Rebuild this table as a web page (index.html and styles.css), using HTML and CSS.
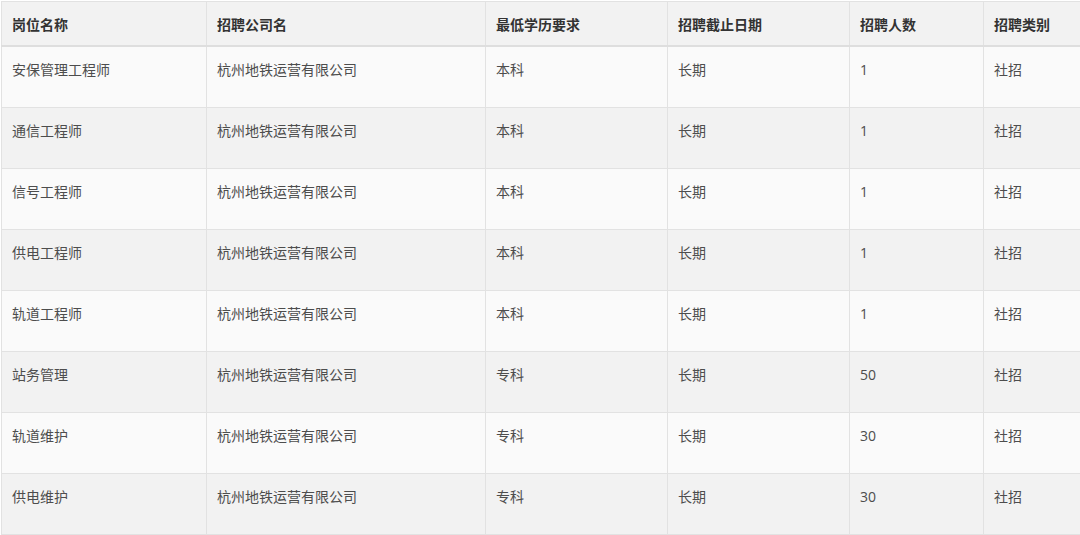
FILE: index.html
```html
<!DOCTYPE html>
<html lang="zh-CN">
<head>
<meta charset="utf-8">
<title>招聘信息</title>
<link rel="stylesheet" href="styles.css">
</head>
<body>
<div class="wrap">
<table class="jobs">
  <colgroup>
    <col class="c1"><col class="c2"><col class="c3"><col class="c4"><col class="c5"><col class="c6">
  </colgroup>
  <thead>
    <tr><th>岗位名称</th><th>招聘公司名</th><th>最低学历要求</th><th>招聘截止日期</th><th>招聘人数</th><th>招聘类别</th></tr>
  </thead>
  <tbody>
    <tr><td>安保管理工程师</td><td>杭州地铁运营有限公司</td><td>本科</td><td>长期</td><td>1</td><td>社招</td></tr>
    <tr><td>通信工程师</td><td>杭州地铁运营有限公司</td><td>本科</td><td>长期</td><td>1</td><td>社招</td></tr>
    <tr><td>信号工程师</td><td>杭州地铁运营有限公司</td><td>本科</td><td>长期</td><td>1</td><td>社招</td></tr>
    <tr><td>供电工程师</td><td>杭州地铁运营有限公司</td><td>本科</td><td>长期</td><td>1</td><td>社招</td></tr>
    <tr><td>轨道工程师</td><td>杭州地铁运营有限公司</td><td>本科</td><td>长期</td><td>1</td><td>社招</td></tr>
    <tr><td>站务管理</td><td>杭州地铁运营有限公司</td><td>专科</td><td>长期</td><td>50</td><td>社招</td></tr>
    <tr><td>轨道维护</td><td>杭州地铁运营有限公司</td><td>专科</td><td>长期</td><td>30</td><td>社招</td></tr>
    <tr><td>供电维护</td><td>杭州地铁运营有限公司</td><td>专科</td><td>长期</td><td>30</td><td>社招</td></tr>
  </tbody>
</table>
</div>
</body>
</html>
```

FILE: styles.css
```css
html, body {
  margin: 0;
  padding: 0;
  background: #ffffff;
  overflow: hidden;
}
.wrap {
  padding: 1px 0 0 1px;
  width: 1079px;
  height: 534px;
  overflow: hidden;
}
.jobs {
  border-collapse: collapse;
  table-layout: fixed;
  width: 1117px;
  font-family: "Open Sans", "Noto Sans CJK SC", sans-serif;
  font-size: 14px;
  line-height: 22px;
}
.c1 { width: 205px; }
.c2 { width: 279px; }
.c3 { width: 182px; }
.c4 { width: 182px; }
.c5 { width: 134px; }
.c6 { width: 135px; }
.jobs th, .jobs td {
  border: 1px solid #e2e2e2;
  text-align: left;
  padding: 0 10px;
  white-space: nowrap;
  overflow: hidden;
}
.jobs th {
  background: #f2f2f2;
  color: #333333;
  font-weight: bold;
  height: 43px;
  vertical-align: middle;
  border-bottom: 2px solid #dedede;
  font-family: "Noto Sans CJK SC", sans-serif;
}
.jobs td {
  color: #4d4d4d;
  height: 47px;
  padding-top: 12px;
  padding-bottom: 1px;
  vertical-align: top;
}
.jobs tbody tr:nth-child(odd) td {
  background: #fafafa;
}
.jobs tbody tr:nth-child(even) td {
  background: #f2f2f2;
}
```
